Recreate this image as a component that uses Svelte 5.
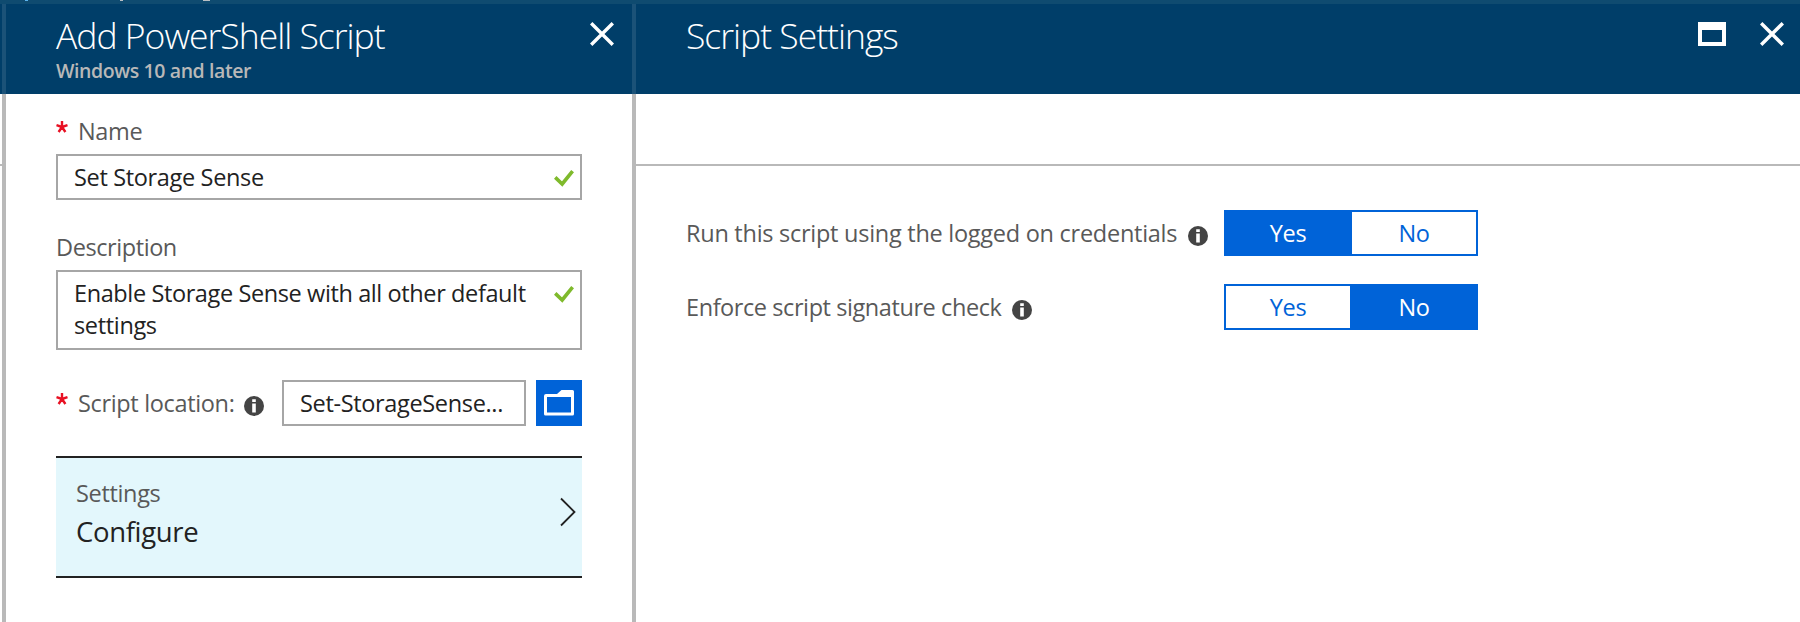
<script>
  const options = ['Yes', 'No'];
  const rows = [
    { label: 'Run this script using the logged on credentials', value: 'Yes', cls: 'run' },
    { label: 'Enforce script signature check', value: 'No', cls: 'enforce' },
  ];
</script>

{#snippet close()}
  <svg class="close" width="24" height="24" viewBox="0 0 24 24"><path d="M1.2 1.2 22.8 22.8M22.8 1.2 1.2 22.8" fill="none" stroke="#fff" stroke-width="3.4" /></svg>
{/snippet}

{#snippet info()}
  <svg class="info" width="20" height="20" viewBox="0 0 20 20"><circle cx="10" cy="10" r="10" fill="#444" /><path d="M8.2 3.3h3.6v2.7H8.2zM8.2 7.5h3.6v9H8.2z" fill="#fff" /></svg>
{/snippet}

{#snippet check()}
  <svg class="check" width="20" height="17" viewBox="0 0 20 17"><path d="M1.2 7.4 8.2 14 18.6 1.2" fill="none" stroke="#7fba2c" stroke-width="3.6" /></svg>
{/snippet}

{#snippet star()}
  <svg class="star" width="12" height="12" viewBox="0 0 12 12"><path d="M6 6V0M6 6 .5 4.2M6 6l5.5-1.8M6 6 2.6 11M6 6l3.4 5" stroke="#e81123" stroke-width="2.4" /></svg>
{/snippet}

<div class="portal">
  <div class="crumb">
    <svg width="240" height="4" viewBox="0 0 240 4"><path d="M25 0h3v1h-3z" fill="#5bb4f0" /><path d="M120 0h3v1h-3zM203 0h7v1h-7z" fill="#b9bfc4" /></svg>
  </div>
  <div class="blades">
    <div class="sliver"><div class="head"></div><div class="band"></div></div>
    <section class="blade add">
      <header class="head">
        <div class="titles">
          <h1 class="t1">Add PowerShell Script</h1>
          <p>Windows 10 and later</p>
        </div>
        {@render close()}
      </header>
      <div class="form">
        <div class="label name">{@render star()}<span>Name</span></div>
        <div class="box one"><span>Set Storage Sense</span>{@render check()}</div>
        <div class="label desc"><span class="wide">Description</span></div>
        <div class="box two"><div class="lines"><span class="first">Enable Storage Sense with all other default</span><br /><span>settings</span></div>{@render check()}</div>
        <div class="location">
          {@render star()}
          <div class="loclabel"><span>Script location:</span></div>
          {@render info()}
          <div class="box file"><span>Set-StorageSense...</span></div>
          <div class="browse"><svg width="30" height="26" viewBox="0 0 30 26"><path fill-rule="evenodd" fill="#fff" d="M0 6Q0 4 2 4H13L17.5 0H28.5Q30 0 30 1.5V24Q30 25.5 28.5 25.5H1.5Q0 25.5 0 24ZM3 7H27V22.5H3Z" /></svg></div>
        </div>
        <div class="settings">
          <div class="stext"><div class="slabel"><span>Settings</span></div><div class="svalue"><span>Configure</span></div></div>
          <svg width="16" height="30" viewBox="0 0 16 30"><path d="M1 1.5 14.5 15 1 28.5" fill="none" stroke="#222" stroke-width="1.8" /></svg>
        </div>
      </div>
    </section>
    <section class="blade script">
      <header class="head">
        <div class="titles"><h1 class="t2">Script Settings</h1></div>
        <svg class="max" width="28" height="24" viewBox="0 0 28 24"><path fill="#fff" fill-rule="evenodd" d="M0 0H28V24H0ZM4 8H24V20H4Z" /></svg>
        {@render close()}
      </header>
      <div class="band"></div>
      <div class="rows">
        {#each rows as row}
          <div class="row">
            <div class="rl"><span class={row.cls}>{row.label}</span>{@render info()}</div>
            <div class="toggle">
              {#each options as o}<div class="opt" class:on={o === row.value}><span>{o}</span></div>{/each}
            </div>
          </div>
        {/each}
      </div>
    </section>
  </div>
</div>

<style>
  :global(body) { margin: 0; overflow: hidden; background: #fff; }
  .portal { width: 1800px; height: 622px; overflow: hidden; background: #fff; font-family: 'Open Sans', 'Noto Sans', sans-serif; font-size: 23.5px; color: #222; }
  .portal * { box-sizing: border-box; }
  svg { display: block; flex: none; }
  span { white-space: nowrap; letter-spacing: -0.34px; }
  .crumb { height: 4px; background: #0f4b70; }
  .blades { display: flex; height: 618px; }
  .head { height: 90px; background: #003e69; display: flex; color: #fff; }
  .sliver { width: 2px; }
  .band { height: 72px; border-bottom: 2px solid #b9b9b9; }
  .blade { border-left: 4px solid #b9b9b9; }
  .blade .head { margin-left: -4px; border-left: 4px solid #1b5278; padding-top: 18px; }
  .add { width: 630px; }
  .script { width: 1168px; }
  .titles { flex: 1; padding-left: 50px; }
  h1 { margin: -11px 0 0; font-size: 35.5px; line-height: 48px; height: 48px; font-weight: 300; white-space: nowrap; }
  .t1 { letter-spacing: -1px; }
  .t2 { letter-spacing: -1px; }
  p { margin: -2px 0 0; font-size: 19.5px; line-height: 28px; font-weight: 600; color: #b8b8b8; letter-spacing: -0.4px; }
  .add .close { margin-right: 18px; }
  .max { margin-right: 34px; }
  .script .close { margin-right: 16px; }
  .form { width: 626px; padding: 0 50px; }
  .label { height: 32px; line-height: 30px; color: #595959; display: flex; }
  .wide { letter-spacing: -0.42px; }
  .first { letter-spacing: -0.39px; }
  .name { margin-top: 22px; gap: 10px; }
  .name .star { margin-top: 5px; }
  .box { border: 2px solid #a6a6a6; background: #fff; display: flex; justify-content: space-between; padding-left: 16px; line-height: 30px; }
  .one { margin-top: 6px; height: 46px; padding-top: 6px; }
  .check { margin: 8px 6px 0 0; }
  .desc { margin-top: 32px; }
  .two { margin-top: 6px; height: 80px; padding-top: 6px; line-height: 32px; }
  .lines { height: 64px; margin-top: -1px; }
  .location { margin-top: 30px; height: 46px; display: flex; color: #595959; line-height: 30px; }
  .location .star { margin-top: 13px; }
  .loclabel { width: 166px; margin: 8px 0 0 10px; }
  .location .info { margin-top: 16px; }
  .file { margin-left: 18px; width: 244px; padding-top: 6px; color: #222; }
  .browse { margin-left: 10px; width: 46px; background: #0063d8; padding: 10px 0 0 8px; }
  .settings { margin-top: 30px; height: 122px; background: #e3f7fc; border: solid #222; border-width: 2px 0; display: flex; justify-content: space-between; padding: 20px 6px 0 20px; }
  .settings svg { margin-top: 19px; }
  .slabel { height: 32px; line-height: 30px; color: #595959; }
  .svalue { font-size: 27.5px; line-height: 36px; margin-top: 4px; }
  .rows { padding: 44px 0 0 50px; display: grid; gap: 28px; }
  .row { display: flex; height: 46px; line-height: 30px; }
  .rl { width: 538px; padding-top: 8px; display: flex; gap: 11px; color: #595959; }
  .rl .info { margin-top: 8px; }
  .run { letter-spacing: -0.265px; }
  .enforce { letter-spacing: -0.42px; }
  .toggle { width: 254px; background: #0063d8; padding: 2px; display: flex; gap: 2px; }
  .opt { flex: 1; text-align: center; padding-top: 6px; background: #fff; color: #0063d8; }
  .opt.on { background: #0063d8; color: #fff; }
</style>
